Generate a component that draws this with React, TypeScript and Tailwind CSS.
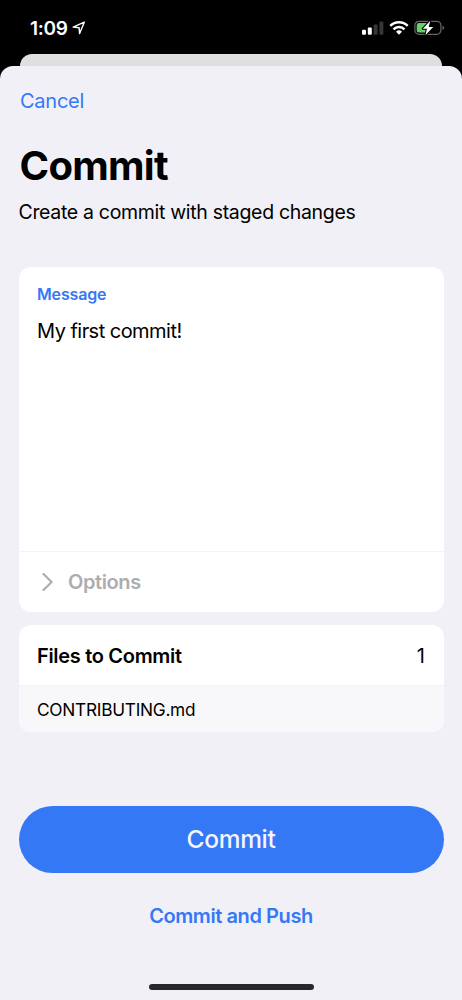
import type { ReactNode } from 'react';

function StatusBar() {
  return (
    <header className="flex h-[54px] items-start justify-between bg-black pl-[30px] pr-[17px] pt-4 text-white">
      <div className="flex h-6 items-center">
        <span className="w-[38px] whitespace-nowrap pt-px text-[19px] font-semibold leading-6 tracking-[-0.3px]">1:09</span>
        <svg className="ml-1" width="14" height="14" viewBox="0 0 14 14" fill="none" stroke="white" strokeWidth="1.4" strokeLinejoin="round">
          <path d="M12.3 1.2 1.2 6.1 7.1 6.8 7.6 12.6Z" />
        </svg>
      </div>
      <div className="flex h-6 items-center">
        <svg width="22" height="14" viewBox="0 0 22 14">
          <rect x="0" y="8.8" width="4" height="5" rx="1.1" fill="white" />
          <rect x="5.8" y="6.4" width="4" height="7.4" rx="1.1" fill="white" />
          <rect x="11.6" y="3.4" width="4" height="10.4" rx="1.1" fill="#363636" />
          <rect x="17.4" y="0.6" width="4" height="13.2" rx="1.1" fill="#363636" />
        </svg>
        <svg className="ml-[5px]" width="20" height="14" viewBox="0 0 20 14" fill="none" stroke="white" strokeWidth="2.5">
          <path d="M1.3 4.9A12.2 12.2 0 0 1 18.7 4.9" />
          <path d="M4.5 8.3A7.8 7.8 0 0 1 15.5 8.3" />
          <path d="M10 13.8 7 10.8A4.3 4.3 0 0 1 13 10.8Z" fill="white" stroke="none" />
        </svg>
        <svg className="ml-[5px]" width="31" height="16" viewBox="0 0 31 16">
          <rect x="0.9" y="1.3" width="26" height="13" rx="4" fill="none" stroke="#666" strokeWidth="1.2" />
          <path d="M28.5 5.7Q30.2 6.4 30.2 7.8T28.5 10Z" fill="#666" />
          <path d="M4.8 3H15.5V12.6H4.8Q2.7 12.6 2.7 10.5V5.1Q2.7 3 4.8 3Z" fill="#68ce67" />
          <path d="M16.3 0.8 8.8 8.8H13L11.4 15.3 19.2 7H14.7Z" fill="white" stroke="black" strokeWidth="2" paintOrder="stroke" strokeLinejoin="round" />
        </svg>
      </div>
    </header>
  );
}

function Card({ children, className }: { children: ReactNode; className: string }) {
  return <section className={`overflow-hidden rounded-[12px] bg-white ${className}`}>{children}</section>;
}

export default function App() {
  return (
    <div className="flex h-[1000px] w-[462px] flex-col overflow-hidden bg-black font-['Inter','Liberation_Sans',sans-serif] text-black">
      <StatusBar />
      <div className="mx-5 h-3 shrink-0 rounded-t-[12px] bg-[#dfdfdf]" />
      <main className="flex flex-1 flex-col rounded-t-[13px] bg-[#f1f0f6] px-[18.5px]">
        <button className="ml-[1.5px] mt-[21px] h-7 self-start whitespace-nowrap text-[20px] leading-7 tracking-[-0.25px] text-[#3478f6]">Cancel</button>
        <h1 className="ml-px mt-[26px] h-[50px] whitespace-nowrap text-[40px] font-bold leading-[50px] tracking-[-0.7px]">Commit</h1>
        <p className="mt-[7px] h-7 whitespace-nowrap text-[19.5px] leading-7 tracking-[-0.32px]">Create a commit with staged changes</p>
        <Card className="mt-[40.5px] flex h-[345.5px] flex-col">
          <div className="h-[285px] border-b-[1.5px] border-[#f3f3f4] px-[18.5px] pt-[17.4px]">
            <label className="block h-5 text-[16px] font-semibold leading-5 tracking-[-0.15px] text-[#3478f6]">Message</label>
            <p className="mt-[13.4px] h-7 whitespace-nowrap text-[20px] leading-7 tracking-[-0.53px]">My first commit!</p>
          </div>
          <button className="flex flex-1 items-center pl-[23px] text-[#adadaf]">
            <svg width="12" height="18" viewBox="0 0 12 18" fill="none" stroke="currentColor" strokeWidth="2.2" strokeLinecap="round" strokeLinejoin="round">
              <path d="M1.5 1 9.6 9 1.5 17" />
            </svg>
            <span className="ml-[14.5px] whitespace-nowrap text-[20px] font-semibold leading-7 tracking-[-0.4px]">Options</span>
          </button>
        </Card>
        <Card className="mt-[13px] h-[107px]">
          <div className="flex h-[61px] items-center justify-between border-b-[1.5px] border-[#f3f3f4] px-[18.5px] pt-[1.5px] text-[20px]">
            <h2 className="whitespace-nowrap font-semibold tracking-[-0.31px]">Files to Commit</h2>
            <span>1</span>
          </div>
          <div className="flex h-[46px] items-center bg-[#f8f8fa] px-[18.5px] pt-[1.5px] text-[17.3px] tracking-[-0.27px]">CONTRIBUTING.md</div>
        </Card>
        <button className="mt-[74px] h-[66.5px] rounded-full bg-[#3478f6] text-[24.5px] font-medium tracking-[-0.3px] text-[#f4f6fb]">Commit</button>
        <button className="mt-[29.2px] h-7 self-center whitespace-nowrap text-[20px] font-semibold leading-7 tracking-[-0.41px] text-[#3478f6]">Commit and Push</button>
        <div className="mb-[10px] mt-auto h-[6px] w-[165px] self-center rounded-full bg-[#28272a]" />
      </main>
    </div>
  );
}
